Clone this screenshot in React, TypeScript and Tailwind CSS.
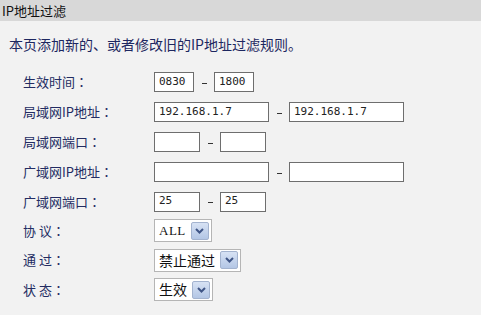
import type { ReactNode } from "react";

const cjk = { fontFamily: '"Noto Sans CJK SC", "Noto Sans", sans-serif' };
const jp = { fontFamily: '"Noto Sans CJK JP", "Noto Sans", sans-serif' };
const mono = { fontFamily: '"DejaVu Sans Mono", "Liberation Mono", monospace' };

function Box({ w, value = "" }: { w: string; value?: string }) {
  return (
    <div
      className={`${w} flex h-[20px] items-center border border-[#6e6e6e] bg-white pl-[4px] text-[11px] text-[#222]`}
      style={mono}
    >
      {value}
    </div>
  );
}

function Dash() {
  return <span className="flex w-[20px] justify-center"><span className="mt-[2px] h-px w-[5px] bg-[#333]" /></span>;
}

function Select({ value, serif }: { value: string; serif?: boolean }) {
  return (
    <div className="flex h-[23px] items-center border border-[#b5b5b5] bg-white pl-[4px] pr-[2px]">
      <span
        className={serif ? "text-[13px] tracking-[0.5px] text-[#111]" : "text-[14px] text-[#111]"}
        style={serif ? { fontFamily: '"Liberation Serif", serif' } : cjk}
      >
        {value}
      </span>
      <span className="ml-[5px] flex h-[18px] w-[18px] items-center justify-center rounded-[2px] border border-[#a3b3cf] bg-gradient-to-b from-[#d7e2f4] to-[#b3c6e5]">
        <svg width="9" height="6" viewBox="0 0 9 6">
          <path d="M1 1 L4.5 4.5 L8 1" fill="none" stroke="#3f5586" strokeWidth="2" />
        </svg>
      </span>
    </div>
  );
}

function Row({ label, h = "h-[30px]", children }: { label: string; h?: string; children: ReactNode }) {
  return (
    <div className={`flex ${h} items-center`}>
      <div className="w-[154px] whitespace-pre pl-[23px] text-[13px] text-[#232c62]" style={cjk}>
        {label}
        <span style={jp}>：</span>
      </div>
      <div className="flex items-center">{children}</div>
    </div>
  );
}

export default function App() {
  return (
    <div className="h-[315px] w-[481px] overflow-hidden bg-[#f2f2f2]">
      <div className="flex h-[21px] items-center bg-[#d8d8d8] pl-[2px] text-[13px] text-[#111]" style={cjk}>
        IP地址过滤
      </div>
      <div className="flex h-[46px] items-center pl-[9px] text-[14px] text-[#1d2760]" style={cjk}>
        本页添加新的、或者修改旧的IP地址过滤规则。
      </div>
      <Row label="生效时间">
        <Box w="w-[40px]" value="0830" />
        <Dash />
        <Box w="w-[40px]" value="1800" />
      </Row>
      <Row label="局域网IP地址">
        <Box w="w-[115px]" value="192.168.1.7" />
        <Dash />
        <Box w="w-[115px]" value="192.168.1.7" />
      </Row>
      <Row label="局域网端口">
        <Box w="w-[46px]" />
        <Dash />
        <Box w="w-[46px]" />
      </Row>
      <Row label="广域网IP地址">
        <Box w="w-[115px]" />
        <Dash />
        <Box w="w-[115px]" />
      </Row>
      <Row label="广域网端口" h="h-[29px]">
        <Box w="w-[46px]" value="25" />
        <Dash />
        <Box w="w-[46px]" value="25" />
      </Row>
      <Row label="协 议" h="h-[29px]">
        <Select value="ALL" serif />
      </Row>
      <Row label="通 过">
        <Select value="禁止通过" />
      </Row>
      <Row label="状 态" h="h-[29px]">
        <Select value="生效" />
      </Row>
    </div>
  );
}
